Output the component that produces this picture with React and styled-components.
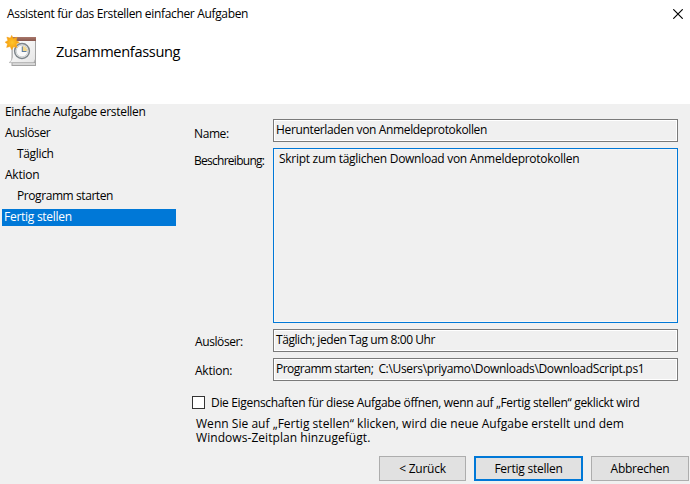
import React from 'react';
import styled, { createGlobalStyle } from 'styled-components';

const GlobalStyle = createGlobalStyle`
  * { box-sizing: border-box; }
  body { margin: 0; background: #fff; }
`;

const Window = styled.div`
  width: 690px;
  height: 484px;
  overflow: hidden;
  display: flex;
  flex-direction: column;
  background: #fff;
  color: #000;
  font: 12px/17px "Open Sans", "Noto Sans", sans-serif;
  white-space: pre;
`;

const Text = styled.span`
  letter-spacing: ${(p) => p.$spacing || 0}px;
`;

const TitleBar = styled.header`
  height: 27px;
  padding: 0 7px;
  display: flex;
  align-items: center;
  justify-content: space-between;
`;

const CloseButton = styled.button`
  width: 10px;
  height: 10px;
  padding: 0;
  border: 0;
  background: none;
  display: flex;
`;

const Heading = styled.div`
  height: 77px;
  padding: 7px 0 0 5px;
  display: flex;
  align-items: flex-start;
`;

const HeadingTitle = styled.h1`
  margin: 6px 0 0 19px;
  font-size: 14.6px;
  font-weight: 400;
  line-height: 22px;
  letter-spacing: -0.34px;
`;

const Body = styled.main`
  flex: 1;
  display: flex;
  background: #f0f0f0;
`;

const Steps = styled.nav`
  width: 176px;
  padding-left: 2px;
  display: flex;
  flex-direction: column;
  gap: 4px;
`;

const Step = styled.div`
  height: 17px;
  line-height: 15px;
  padding-left: ${(p) => (p.$nested ? 15 : p.$active ? 2 : 3)}px;
  background: ${(p) => (p.$active ? '#0078d7' : 'transparent')};
  color: ${(p) => (p.$active ? '#fff' : '#000')};
`;

const Content = styled.section`
  width: 514px;
  padding-top: 15px;
  display: flex;
  flex-direction: column;
`;

const Form = styled.div`
  padding: 0 12px 0 18px;
  display: grid;
  grid-template-columns: 79px 405px;
  grid-template-rows: 23px 175px 23px 23px;
  row-gap: 6px;
`;

const Label = styled.label`
  padding: ${(p) => p.$top}px 0 0 ${(p) => p.$left || 0}px;
`;

const Field = styled.div`
  padding: 1px 0 0 ${(p) => (p.$focused ? 5 : 2)}px;
  border: 1px solid ${(p) => (p.$focused ? '#0078d7' : '#7a7a7a')};
  box-shadow: inset 0 0 0 1px ${(p) => (p.$focused ? '#f6f6f6' : '#fff')};
  display: flex;
  gap: 5px;
`;

const Option = styled.label`
  margin: 13px 0 0 16px;
  display: flex;
  align-items: center;
  gap: 6px;
`;

const CheckBox = styled.span`
  width: 13px;
  height: 13px;
  border: 1px solid #333;
  background: #fff;
`;

const Note = styled.p`
  margin: 6px 0 0 20px;
  line-height: 14px;
`;

const Actions = styled.footer`
  margin: 11px 1px 0 0;
  display: flex;
  justify-content: flex-end;
  gap: 8px;
`;

const Button = styled.button`
  width: ${(p) => p.$width}px;
  height: 25px;
  padding: 0;
  border: ${(p) => (p.$primary ? '2px solid #0078d7' : '1px solid #adadad')};
  background: #e1e1e1;
  color: #000;
  font: inherit;
  letter-spacing: -0.25px;
  white-space: pre;
`;

function TaskIcon() {
  return (
    <svg width="32" height="34" viewBox="0 0 32 34">
      <defs>
        <linearGradient id="sheet" x1="0" y1="0" x2="1" y2="1">
          <stop offset="0" stopColor="#fff" />
          <stop offset="1" stopColor="#e6e6e6" />
        </linearGradient>
        <linearGradient id="binding" x1="0" y1="0" x2="0" y2="1">
          <stop offset="0" stopColor="#a9776a" />
          <stop offset="1" stopColor="#87594f" />
        </linearGradient>
        <radialGradient id="star">
          <stop offset="0" stopColor="#ffc52d" />
          <stop offset="1" stopColor="#f59c0b" />
        </radialGradient>
      </defs>
      <path d="M6.5 6h24.5v26H6.5z" fill="#a3a3a3" />
      <path d="M7.5 29h22.5v2H7.5z" fill="#d8d8d8" />
      <path d="M7.5 7v16q-.5 4-3.3 5.6h24q1.8-.8 1.8-3V7z" fill="url(#sheet)" />
      <path d="M7.5 12v11q-.5 4-3.3 5.6h24q1.8-.8 1.8-3" fill="none" stroke="#b4b4b4" strokeWidth=".8" />
      <path d="M7 3h24v4H7z" fill="url(#binding)" />
      <circle cx="17" cy="17" r="7.4" fill="#efefeb" stroke="#7d858b" strokeWidth="1.5" />
      <circle cx="17" cy="17" r="5.8" fill="#fafafa" stroke="#c5cace" strokeWidth=".8" />
      <path d="M17.3 17v-5a5 5 0 0 1 5 5z" fill="#f3d78c" />
      <path d="M17.3 12.5V17.5H21.5" fill="none" stroke="#5f7e9c" strokeWidth="1.1" />
      <path
        d="M6.7 1.3l1.6 3.1 3.8-1.2-.8 3.3 3.1 1.8-3 1.7.7 3.6-3.4-.9-2 3.1-1.6-3.3-3.5 1 .9-3.5-2.5-1.8 2.8-1.8-1-3.3 3.5 1z"
        fill="url(#star)"
        stroke="#f4a122"
        strokeWidth=".4"
      />
    </svg>
  );
}

const steps = [
  { text: 'Einfache Aufgabe erstellen', spacing: -0.31 },
  { text: 'Auslöser', spacing: -0.36 },
  { text: 'Täglich', nested: true, spacing: -0.34 },
  { text: 'Aktion', spacing: -0.24 },
  { text: 'Programm starten', nested: true, spacing: -0.42 },
  { text: 'Fertig stellen', active: true, spacing: -0.27 },
];

export default function App() {
  return (
    <Window>
      <GlobalStyle />
      <TitleBar>
        <Text $spacing={-0.34}>Assistent für das Erstellen einfacher Aufgaben</Text>
        <CloseButton aria-label="Schließen">
          <svg width="10" height="10" viewBox="0 0 10 10">
            <path d="M.3 .3L9.7 9.7M9.7 .3L.3 9.7" stroke="#000" strokeWidth="1.15" />
          </svg>
        </CloseButton>
      </TitleBar>
      <Heading>
        <TaskIcon />
        <HeadingTitle>Zusammenfassung</HeadingTitle>
      </Heading>
      <Body>
        <Steps>
          {steps.map((s) => (
            <Step key={s.text} $nested={s.nested} $active={s.active}>
              <Text $spacing={s.spacing}>{s.text}</Text>
            </Step>
          ))}
        </Steps>
        <Content>
          <Form>
            <Label $top={6}><Text $spacing={-0.4}>Name:</Text></Label>
            <Field><Text $spacing={-0.35}>Herunterladen von Anmeldeprotokollen</Text></Field>
            <Label $top={4}><Text $spacing={-0.73}>Beschreibung:</Text></Label>
            <Field $focused><Text $spacing={-0.28}>Skript zum täglichen Download von Anmeldeprotokollen</Text></Field>
            <Label $top={4} $left={1}><Text $spacing={-0.4}>Auslöser:</Text></Label>
            <Field><Text $spacing={-0.43}>Täglich; jeden Tag um 8:00 Uhr</Text></Field>
            <Label $top={4} $left={1}><Text $spacing={-0.25}>Aktion:</Text></Label>
            <Field>
              <Text $spacing={-0.5}>Programm starten;</Text>
              <Text $spacing={-0.33}>{'C:\\Users\\priyamo\\Downloads\\DownloadScript.ps1'}</Text>
            </Field>
          </Form>
          <Option>
            <CheckBox />
            <Text $spacing={-0.33}>Die Eigenschaften für diese Aufgabe öffnen, wenn auf „Fertig stellen“ geklickt wird</Text>
          </Option>
          <Note>
            <Text $spacing={0.03}>Wenn Sie auf „Fertig stellen“ klicken, wird die neue Aufgabe erstellt und dem</Text>
            <br />
            <Text $spacing={0.06}>Windows-Zeitplan hinzugefügt.</Text>
          </Note>
          <Actions>
            <Button $width={87}>{'< Zurück'}</Button>
            <Button $width={109} $primary>Fertig stellen</Button>
            <Button $width={98}>Abbrechen</Button>
          </Actions>
        </Content>
      </Body>
    </Window>
  );
}
